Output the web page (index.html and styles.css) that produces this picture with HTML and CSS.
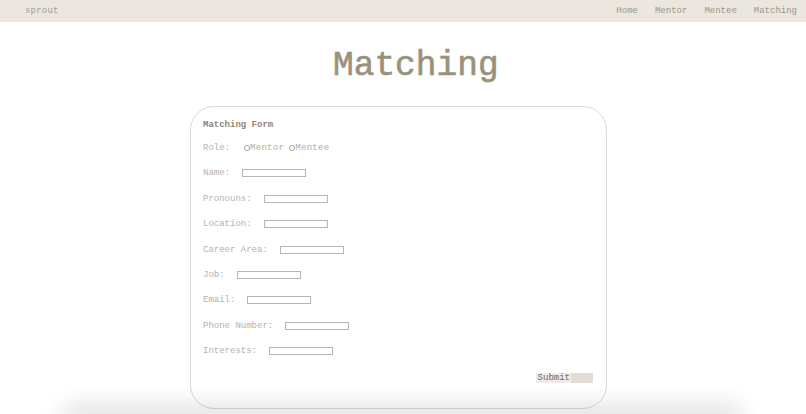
FILE: index.html
```html
<!DOCTYPE html>
<html>
<head>
<meta charset="utf-8">
<link rel="stylesheet" href="styles.css">
</head>
<body>
<nav class="navbar">
  <span class="brand">sprout</span>
  <div class="links">
    <a class="link">Home</a>
    <a class="link">Mentor</a>
    <a class="link">Mentee</a>
    <a class="link">Matching</a>
  </div>
</nav>
<main class="main">
  <h1 class="title">Matching</h1>
  <form class="card">
    <div class="form-title">Matching Form</div>
    <div class="row"><span class="label label-role">Role:</span><span class="radios"><span class="radio"><span class="dot"></span>Mentor</span><span class="radio"><span class="dot"></span>Mentee</span></span></div>
    <div class="row"><span class="label">Name:</span><span class="input"></span></div>
    <div class="row"><span class="label">Pronouns:</span><span class="input"></span></div>
    <div class="row"><span class="label">Location:</span><span class="input"></span></div>
    <div class="row"><span class="label">Career Area:</span><span class="input"></span></div>
    <div class="row"><span class="label">Job:</span><span class="input"></span></div>
    <div class="row"><span class="label">Email:</span><span class="input"></span></div>
    <div class="row"><span class="label">Phone Number:</span><span class="input"></span></div>
    <div class="row"><span class="label">Interests:</span><span class="input"></span></div>
    <div class="actions"><span class="submit"><span class="submit-text">Submit</span><span class="submit-pad"></span></span></div>
  </form>
  <div class="footer"></div>
</main>
</body>
</html>
```
FILE: styles.css
```css
* { box-sizing: border-box; }
html, body { margin: 0; padding: 0; background: #ffffff; overflow: hidden; }
body { font-family: "Liberation Mono", "Courier New", monospace; }

.navbar {
  height: 22px;
  background: #ebe6df;
  display: flex;
  align-items: center;
  justify-content: space-between;
  padding: 0 9px 0 25px;
  font-size: 9px;
  color: #9d9584;
}
.brand { color: #a29c90; letter-spacing: 0.2px; }
.links { display: flex; gap: 17px; }
.link { color: #9d9584; }

.main { display: flex; flex-direction: column; align-items: flex-start; }
.title {
  margin: 24px 0 0 333px;
  font-size: 34.5px;
  line-height: 40px;
  font-weight: normal;
  color: #9b917a;
  -webkit-text-stroke: 0.6px #9b917a;
}
.card {
  margin: 20px 0 0 190px;
  width: 417px;
  height: 303px;
  border: 1px solid #ddd9d2;
  border-radius: 24px;
  padding: 13px 13px 0 12px;
  display: flex;
  flex-direction: column;
}
.form-title {
  font-size: 9px;
  line-height: 10px;
  font-weight: bold;
  color: #8e8577;
  margin-bottom: 13px;
}
.row {
  display: flex;
  align-items: center;
  height: 10px;
  margin-bottom: 15.4px;
  font-size: 9px;
  color: #b7b2aa;
}
.label { margin-right: 12px; }
.label-role { margin-right: 14px; }
.radios { display: flex; gap: 5px; color: #b3aea5; letter-spacing: 0.3px; }
.radio { display: flex; align-items: center; }
.dot {
  width: 6px; height: 6px;
  border: 1px solid #aaa59c;
  border-radius: 50%;
}
.input {
  width: 64px;
  height: 8px;
  border: 1px solid #b9b5ae;
  background: #fff;
}
.actions {
  display: flex;
  justify-content: flex-end;
  margin-top: 1px;
}
.submit { display: flex; height: 10px; font-size: 9px; line-height: 10px; }
.submit-text { background: #efece8; color: #6e695f; padding: 0 1px 0 2px; }
.submit-pad { width: 22px; background: #e1dcd5; }

.footer {
  margin: 5px 0 0 70px;
  width: 666px;
  height: 2px;
  box-shadow: 0 0 24px 5px rgba(0,0,0,0.22);
}
```
